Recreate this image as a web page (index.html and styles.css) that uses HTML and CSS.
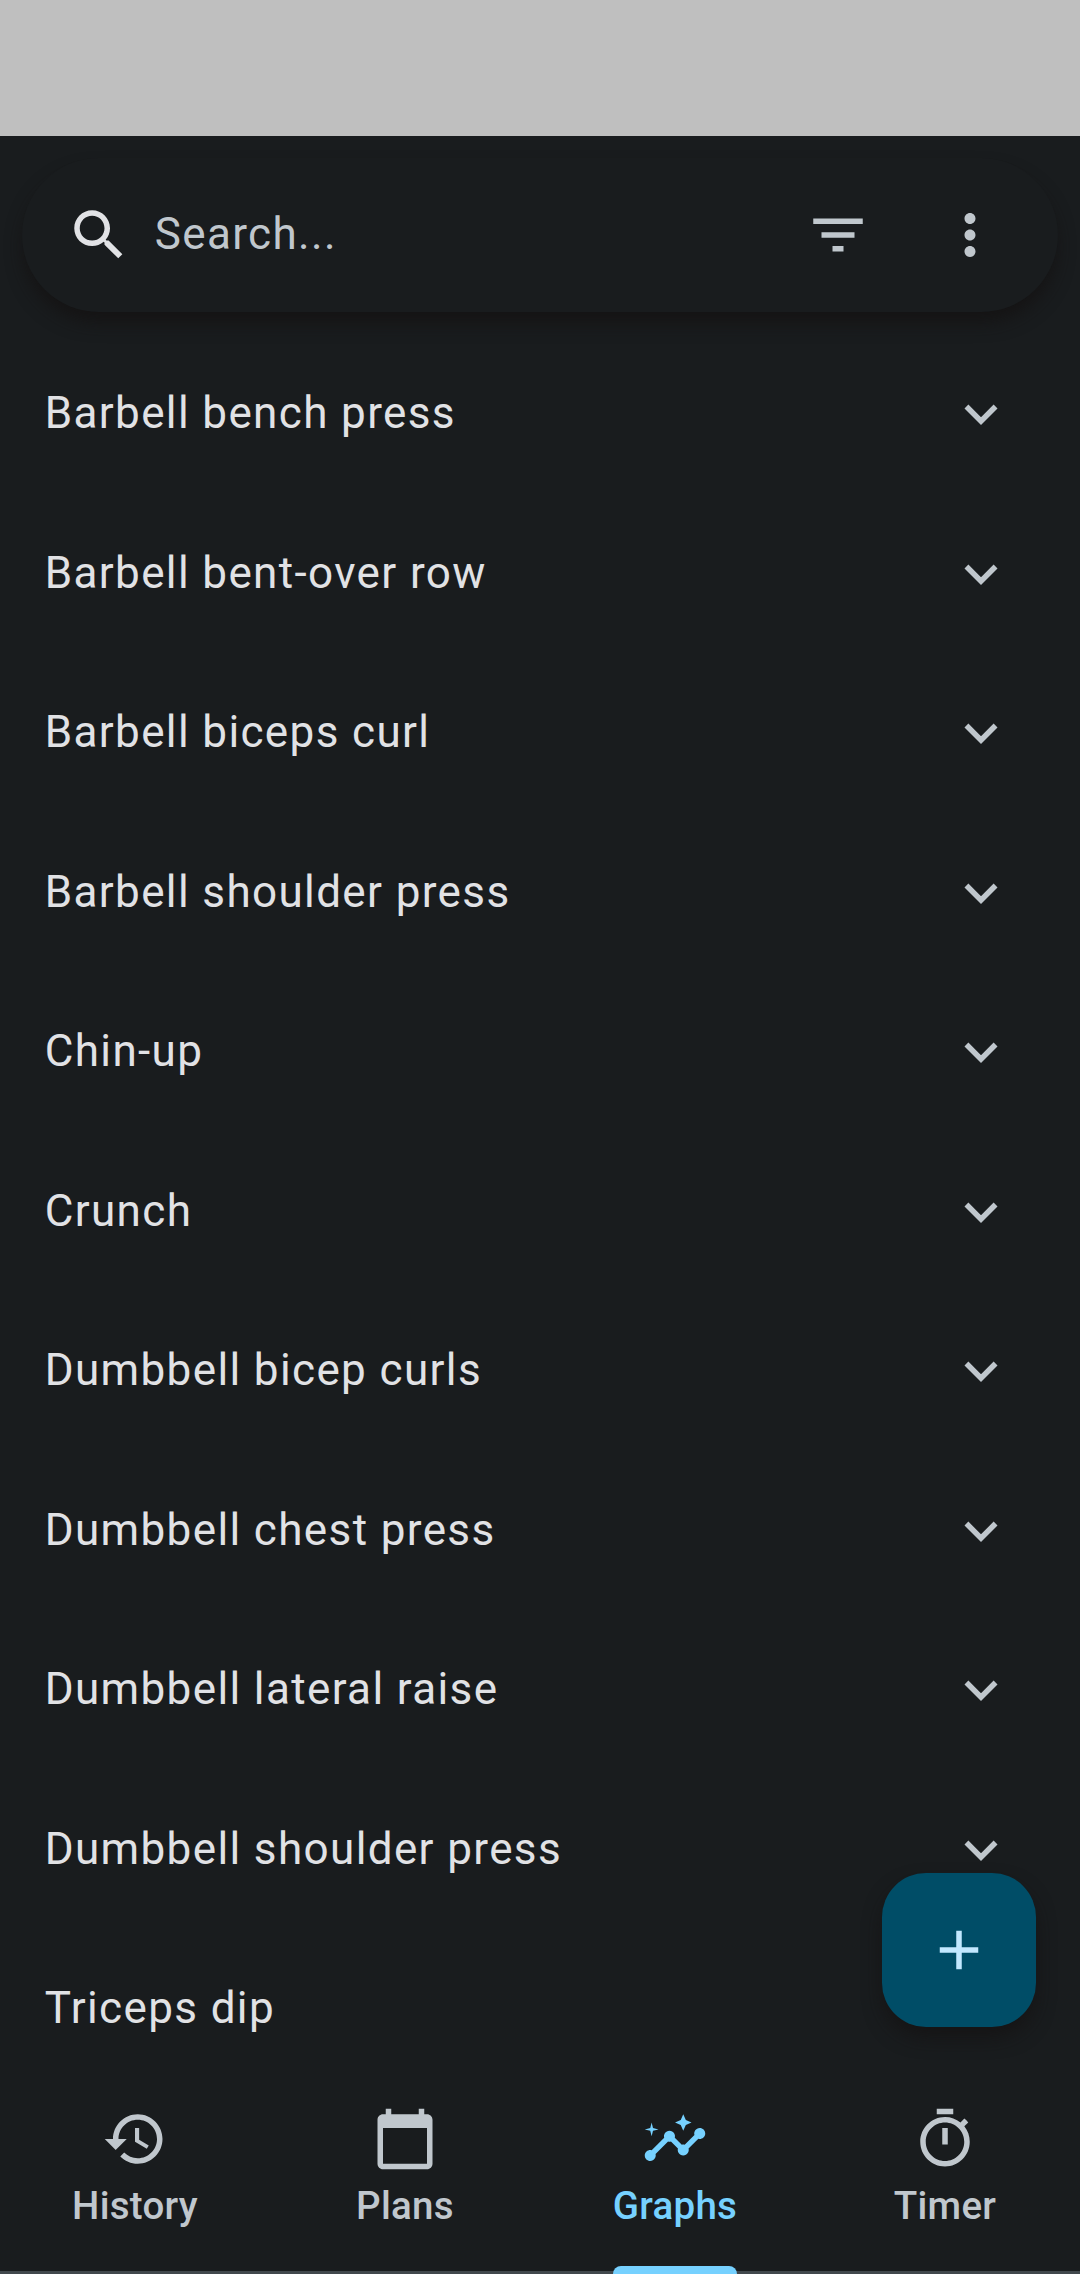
FILE: index.html
```html
<!DOCTYPE html>
<html lang="en">
<head>
<meta charset="utf-8">
<title>Graphs</title>
<link rel="stylesheet" href="styles.css">
</head>
<body>
<svg class="sprite" aria-hidden="true">
  <symbol id="chevron" viewBox="0 0 24 24"><path d="M16.59 8.59L12 13.17 7.41 8.59 6 10l6 6 6-6z"/></symbol>
</svg>
<div class="app">
  <div class="status-bar"></div>
  <header class="search">
    <svg class="icon search-icon" viewBox="0 0 24 24"><path d="M15.5 14h-.79l-.28-.27C15.41 12.59 16 11.11 16 9.5 16 5.91 13.09 3 9.5 3S3 5.91 3 9.5 5.91 16 9.5 16c1.61 0 3.09-.59 4.23-1.57l.27.28v.79l5 4.99L20.49 19l-4.99-5zm-6 0C7.01 14 5 11.99 5 9.5S7.01 5 9.5 5 14 7.01 14 9.5 11.99 14 9.5 14z"/></svg>
    <span class="placeholder">Search...</span>
    <svg class="icon" viewBox="0 0 24 24"><path d="M10 18h4v-2h-4v2zM3 6v2h18V6H3zm3 7h12v-2H6v2z"/></svg>
    <svg class="icon" viewBox="0 0 24 24"><path d="M12 8c1.1 0 2-.9 2-2s-.9-2-2-2-2 .9-2 2 .9 2 2 2zm0 2c-1.100 0-2 .9-2 2s.9 2 2 2 2-.9 2-2-.9-2-2-2zm0 6c-1.100 0-2 .9-2 2s.9 2 2 2 2-.9 2-2-.9-2-2-2z"/></svg>
  </header>
  <main class="list">
    <div class="row"><span>Barbell bench press</span><svg class="icon"><use href="#chevron"/></svg></div>
    <div class="row"><span>Barbell bent-over row</span><svg class="icon"><use href="#chevron"/></svg></div>
    <div class="row"><span>Barbell biceps curl</span><svg class="icon"><use href="#chevron"/></svg></div>
    <div class="row"><span>Barbell shoulder press</span><svg class="icon"><use href="#chevron"/></svg></div>
    <div class="row"><span>Chin-up</span><svg class="icon"><use href="#chevron"/></svg></div>
    <div class="row"><span>Crunch</span><svg class="icon"><use href="#chevron"/></svg></div>
    <div class="row"><span>Dumbbell bicep curls</span><svg class="icon"><use href="#chevron"/></svg></div>
    <div class="row"><span>Dumbbell chest press</span><svg class="icon"><use href="#chevron"/></svg></div>
    <div class="row"><span>Dumbbell lateral raise</span><svg class="icon"><use href="#chevron"/></svg></div>
    <div class="row"><span>Dumbbell shoulder press</span><svg class="icon"><use href="#chevron"/></svg></div>
    <div class="row"><span>Triceps dip</span></div>
  </main>
  <nav class="tabs">
    <div class="tab">
      <svg class="icon" viewBox="0 0 24 24"><path d="M13 3c-4.970 0-9 4.030-9 9H1l3.890 3.890.070.140L9 12H6c0-3.870 3.130-7 7-7s7 3.130 7 7-3.130 7-7 7c-1.930 0-3.680-.790-4.940-2.060l-1.420 1.420C8.270 19.990 10.510 21 13 21c4.970 0 9-4.030 9-9s-4.030-9-9-9zm-1 5v5l4.280 2.540.720-1.210-3.500-2.080V8H12z"/></svg>
      <span>History</span>
    </div>
    <div class="tab">
      <svg class="icon" viewBox="0 0 24 24"><path d="M20 3h-1V1h-2v2H7V1H5v2H4c-1.100 0-2 .9-2 2v16c0 1.100.9 2 2 2h16c1.100 0 2-.9 2-2V5c0-1.100-.9-2-2-2zm0 18H4V8h16v13z"/></svg>
      <span>Plans</span>
    </div>
    <div class="tab active">
      <svg class="icon" viewBox="0 0 24 24"><path d="M21 8c-1.450 0-2.260 1.440-1.930 2.510l-3.550 3.560c-.3-.09-.74-.09-1.040 0l-2.550-2.550C12.270 10.450 11.460 9 10 9c-1.450 0-2.270 1.440-1.930 2.520l-4.560 4.550C2.440 15.740 1 16.550 1 18c0 1.100.9 2 2 2 1.450 0 2.260-1.440 1.930-2.510l4.550-4.560c.3.09.74.09 1.040 0l2.550 2.550C12.730 16.550 13.540 18 15 18c1.450 0 2.270-1.440 1.930-2.520l3.560-3.550C21.560 12.260 23 11.450 23 10c0-1.100-.9-2-2-2z"/><path d="M15 9l.94-2.070L18 6l-2.060-.93L15 3l-.92 2.070L12 6l2.080.93zM3.500 11L4 9l2-.5L4 8l-.5-2L3 8l-2 .5L3 9z"/></svg>
      <span>Graphs</span>
    </div>
    <div class="tab">
      <svg class="icon" viewBox="0 0 24 24"><path d="M15 1H9v2h6V1zm-4 13h2V8h-2v6zm8.030-6.610l1.420-1.420c-.43-.51-.9-.99-1.410-1.410l-1.420 1.420C16.070 4.740 14.120 4 12 4c-4.970 0-9 4.030-9 9s4.020 9 9 9 9-4.030 9-9c0-2.120-.74-4.070-1.970-5.610zM12 20c-3.870 0-7-3.130-7-7s3.130-7 7-7 7 3.130 7 7-3.130 7-7 7z"/></svg>
      <span>Timer</span>
    </div>
  </nav>
  <div class="fab">
    <svg class="icon" viewBox="0 0 24 24"><path d="M19 13h-6v6h-2v-6H5v-2h6V5h2v6h6v2z"/></svg>
  </div>
</div>
</body>
</html>
```
FILE: styles.css
```css
body {
  margin: 0;
  background: #191c1e;
  font-family: Roboto, "Noto Sans", sans-serif;
}

.sprite {
  display: none;
}

.app {
  position: relative;
  display: flex;
  flex-direction: column;
  width: 1080px;
  height: 2274px;
  overflow: hidden;
  color: #e1e2e5;
}

.icon {
  flex: none;
  display: block;
  width: 66px;
  height: 66px;
  fill: #c0c7cd;
}

.status-bar {
  flex: none;
  height: 136px;
  background: #bfbfbf;
}

.search {
  flex: none;
  display: flex;
  align-items: center;
  gap: 66px;
  box-sizing: border-box;
  height: 154px;
  margin: 22px 22px 0;
  padding: 0 55px 0 44px;
  border-radius: 77px;
  background: #191c1e;
  box-shadow: 0 12px 18px -2px rgba(20, 18, 18, 0.8);
}

.search-icon {
  fill: #e1e2e5;
  margin-right: -44px;
}

.placeholder {
  flex: 1;
  padding: 0 0 2px 0.7px;
  font-size: 44px;
  line-height: 66px;
  letter-spacing: 1.375px;
  color: #c0c7cd;
}

.list {
  flex: 1;
  min-height: 0;
  overflow: hidden;
  margin-top: 22.3px;
}

.search {
  position: relative;
  z-index: 1;
}

.row {
  display: flex;
  align-items: center;
  justify-content: space-between;
  height: 159.5px;
  padding: 0 66px 0 44px;
  font-size: 44px;
  line-height: 66px;
  letter-spacing: 1.375px;
}

.row span {
  padding: 0 0 1.3px 0.7px;
}

.tabs {
  flex: none;
  display: flex;
  box-sizing: border-box;
  height: 198px;
  border-bottom: 3px solid #41484d;
}

.tab {
  position: relative;
  flex: 1;
  display: flex;
  flex-direction: column;
  align-items: center;
  padding-top: 30px;
  font-size: 38.5px;
  line-height: 55px;
  font-weight: 500;
  letter-spacing: 0.275px;
  color: #c0c7cd;
}

.tab span {
  margin-top: 6px;
}

.active {
  color: #76d1ff;
}

.active .icon {
  fill: #76d1ff;
}

.active::after {
  content: "";
  position: absolute;
  left: 73px;
  right: 73px;
  bottom: -3px;
  height: 8px;
  border-radius: 8px 8px 0 0;
  background: #76d1ff;
}

.fab {
  position: absolute;
  right: 44px;
  bottom: 247.5px;
  display: flex;
  align-items: center;
  justify-content: center;
  width: 154px;
  height: 154px;
  border-radius: 44px;
  background: #004d67;
  box-shadow: 0 11px 20px -2px rgba(20, 18, 18, 0.75);
}

.fab .icon {
  fill: #c2e8ff;
}
```
